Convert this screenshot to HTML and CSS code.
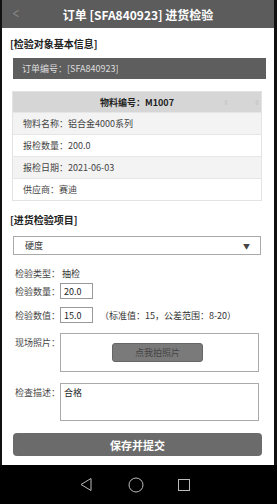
FILE: index.html
```html
<!DOCTYPE html>
<html>
	<head>
		<meta charset="UTF-8">
		<title>进货检验</title>
		<link rel="stylesheet" href="styles.css">
	</head>
	<body>
		<div class="phone">
			<div class="topbar">
				<span class="back">&lt;</span>
				<h1>订单 [SFA840923] 进货检验</h1>
			</div>
			<div class="content">
				<p class="sect">[检验对象基本信息]</p>
				<div class="order">订单编号：[SFA840923]</div>
				<table class="info">
					<tr>
						<th>物料编号：M1007<span class="sort s1">⇕</span><span class="sort s2">⇕</span></th>
					</tr>
					<tr class="odd"><td>物料名称：铝合金4000系列</td></tr>
					<tr><td>报检数量：200.0</td></tr>
					<tr class="odd"><td>报检日期：2021-06-03</td></tr>
					<tr><td>供应商：赛迪</td></tr>
				</table>
				<p class="sect sect2">[进货检验项目]</p>
				<div class="select">
					<span>硬度</span>
					<span class="arrow">▼</span>
				</div>
				<div class="row first">
					<label>检验类型：</label>
					<span class="val">抽检</span>
				</div>
				<div class="row second">
					<label>检验数量：</label>
					<input class="num" type="text" value="20.0">
				</div>
				<div class="row">
					<label>检验数值：</label>
					<input class="num" type="text" value="15.0">
					<span class="hint">（标准值：15，公差范围：8-20）</span>
				</div>
				<div class="row top">
					<label>现场照片：</label>
					<div class="photo">
						<button class="shot">点我拍照片</button>
					</div>
				</div>
				<div class="row top desc-row">
					<label>检查描述：</label>
					<textarea class="desc">合格</textarea>
				</div>
				<button class="submit">保存并提交</button>
			</div>
		</div>
		<div class="navbar">
			<svg width="12" height="13" viewBox="0 0 12 13"><path d="M11 0.5 L1 6.5 L11 12.5 Z" fill="none" stroke="#bbb" stroke-width="1"/></svg>
			<svg class="home" width="16" height="16" viewBox="0 0 16 16"><circle cx="8" cy="8" r="7" fill="none" stroke="#bbb" stroke-width="1"/></svg>
			<svg width="12" height="12" viewBox="0 0 12 12"><rect x="0.5" y="0.5" width="11" height="11" fill="none" stroke="#bbb" stroke-width="1"/></svg>
		</div>
	</body>
</html>
```

FILE: styles.css
```css
html,body,h1,p,table,td,th{
	margin: 0;
	padding: 0;
}
body{
	background: #111;
	font-family: "Noto Sans CJK SC", "Liberation Sans", sans-serif;
	color: #333;
	width: 277px;
	height: 504px;
	overflow: hidden;
}
.phone{
	margin: 0 3px 0 2px;
	background: #fff;
	height: 465px;
	overflow: hidden;
}
.topbar{
	position: relative;
	height: 28px;
	background: #5c5c5c;
	display: flex;
	align-items: center;
	justify-content: center;
}
.topbar h1{
	font-size: 12px;
	font-weight: bold;
	color: #fff;
}
.back{
	position: absolute;
	left: 8px;
	top: 5px;
	color: #888;
	font-size: 14px;
	font-family: "DejaVu Sans", sans-serif;
	transform: scaleX(0.6);
}
.content{
	padding: 0 8px 0 8px;
}
.sect{
	font-size: 10px;
	font-weight: bold;
	color: #222;
	margin-top: 9px;
	height: 13px;
	line-height: 13px;
}
.sect2{
	margin-top: 12px;
}
.order{
	margin: 8px 0 0 3px;
	width: 253px;
	height: 21px;
	background: #5e5e5e;
	color: #ddd;
	font-size: 9px;
	line-height: 21px;
	padding-left: 9px;
	box-sizing: border-box;
}
.info{
	margin: 12px 0 0 2px;
	width: 250px;
	border-collapse: collapse;
	border: 1px solid #e3e3e3;
	font-size: 9px;
}
.info th{
	position: relative;
	height: 20px;
	background: #d6d6d6;
	font-weight: bold;
	color: #222;
	text-align: center;
}
.sort{
	position: absolute;
	top: 5px;
	color: #c4c4c4;
	font-size: 7px;
	font-weight: normal;
}
.s1{ left: 210px; }
.s2{ left: 241px; }
.info td{
	height: 21px;
	padding-left: 10px;
	border-top: 1px solid #e6e6e6;
	color: #444;
}
.info .odd td{
	background: #f3f3f3;
}
.select{
	margin: 10px 0 0 3px;
	width: 248px;
	height: 19px;
	border: 1px solid #aaa;
	box-sizing: border-box;
	display: flex;
	justify-content: space-between;
	align-items: center;
	padding: 0 10px 0 11px;
	font-size: 9px;
	color: #333;
}
.arrow{
	font-size: 7px;
	color: #444;
}
.row{
	display: flex;
	align-items: center;
	margin-top: 8px;
	font-size: 9px;
	color: #444;
}
.first{
	margin-top: 12px;
	height: 13px;
}
.second{
	margin-top: 3px;
}
.row label{
	width: 50px;
	padding-left: 5px;
	box-sizing: border-box;
	flex: none;
}
.top{
	align-items: flex-start;
	margin-top: 10px;
}
.desc-row{
	margin-top: 11px;
}
.top label{
	margin-top: 3px;
}
.val{
	color: #333;
	margin-left: 2px;
}
.num{
	width: 33px;
	height: 16px;
	box-sizing: border-box;
	border: 1px solid #999;
	font-size: 9px;
	font-family: inherit;
	padding: 0 3px;
	color: #222;
}
.hint{
	margin-left: 7px;
	color: #333;
}
.photo{
	width: 199px;
	height: 39px;
	border: 1px solid #aaa;
	box-sizing: border-box;
	display: flex;
	justify-content: center;
	padding-top: 9px;
}
.shot{
	width: 91px;
	height: 19px;
	background: #7a7a7a;
	border: 1px solid #666;
	border-radius: 3px;
	color: #444;
	font-size: 9px;
	font-family: inherit;
	margin-right: 4px;
}
.desc{
	width: 199px;
	height: 38px;
	border: 1px solid #aaa;
	box-sizing: border-box;
	resize: none;
	font-size: 9px;
	font-family: inherit;
	color: #222;
	padding: 2px 3px;
}
.submit{
	display: block;
	margin: 12px 0 0 3px;
	width: 249px;
	height: 23px;
	background: #6b6b6b;
	border: none;
	border-radius: 4px;
	color: #fff;
	font-size: 11px;
	font-weight: bold;
	font-family: inherit;
}
.navbar{
	height: 39px;
	background: #000;
	display: flex;
	align-items: center;
	padding-left: 80px;
}
.home{
	margin: 0 34px 0 36px;
}
```
